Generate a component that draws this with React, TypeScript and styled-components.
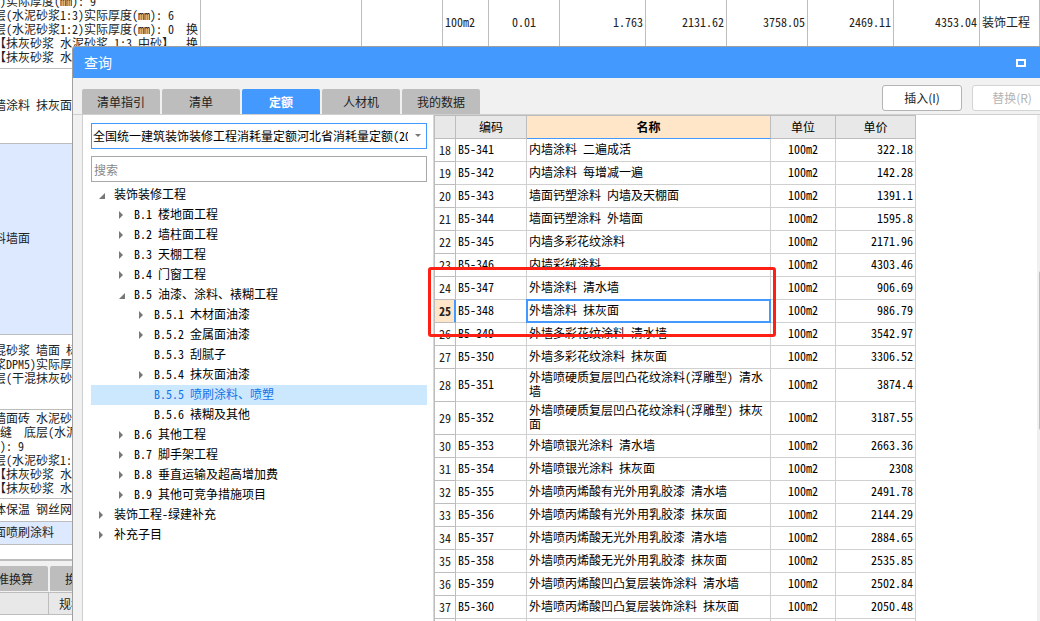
import React from "react";
import styled, { createGlobalStyle, css } from "styled-components";

const MONO = `"Noto Sans Mono CJK SC", "Noto Sans CJK SC", monospace`;
const SANS = `"Noto Sans CJK SC", sans-serif`;
const BLUE = "#4499ff";
const LINE = "#bdbdbd";
const PEACH = "#ffe6c8";

const GlobalStyle = createGlobalStyle`
  *, *::before, *::after { box-sizing: border-box; }
  body { margin: 0; background: #fff; color: #222; font: 12px/14px ${MONO}; }
  button, input, select { margin: 0; font: inherit; color: inherit; }
  table { border-collapse: separate; border-spacing: 0; table-layout: fixed; }
`;

const Screen = styled.div`
  position: relative;
  height: 100vh;
  overflow: hidden;
`;

/* Bill sheet behind the dialog, scrolled part of a row down and to the right */
const Sheet = styled.div`
  margin: -22px 0 0 -8px;
`;

const BillTable = styled.table`
  width: 100%;
`;

const BillRow = styled.tr<{ $h: number; $active?: boolean }>`
  height: ${(p) => p.$h}px;
  background: ${(p) => (p.$active ? "#dce9ff" : "#fff")};
`;

const BillCell = styled.td<{ $align?: string }>`
  padding: 0 2px 2px;
  border-right: 1px solid ${LINE};
  border-bottom: 1px solid ${LINE};
  text-align: ${(p) => p.$align || "left"};
  white-space: pre;
  overflow: hidden;
`;

const DetailPane = styled.div`
  margin-top: 14px;
  padding-top: 5px;
  border-top: 2px solid ${LINE};
  background: #f1f1f1;
`;

const DetailTabs = styled.div`
  display: flex;
  gap: 2px;
  margin-left: -22px;
  padding-bottom: 1px;
`;

const DetailHead = styled.div`
  display: flex;
  height: 23px;
  border-top: 1px solid ${LINE};
  border-bottom: 1px solid ${LINE};
  background: #e8e8e8;
  line-height: 21px;
`;

const DetailHeadCell = styled.div`
  flex: none;
  width: 57px;
  border-right: 1px solid ${LINE};
`;

const DetailHeadLabel = styled.div`
  padding-left: 10px;
`;

const DetailBody = styled.div`
  height: 40px;
  background: #fff;
`;

const Tab = styled.button<{ $active?: boolean }>`
  flex: none;
  width: 78px;
  height: 25px;
  padding: 0;
  border: 0;
  border-radius: 2px 2px 0 0;
  background: ${(p) => (p.$active ? BLUE : LINE)};
  color: ${(p) => (p.$active ? "#fff" : "#222")};
  font-weight: ${(p) => (p.$active ? 700 : 400)};
`;

/* Dialog window floating over the sheet, running past the right edge */
const Dialog = styled.section`
  position: absolute;
  top: 46px;
  left: 72px;
  right: -24px;
  bottom: -20px;
  display: flex;
  flex-direction: column;
  border: 1px solid #a0a0a0;
  border-radius: 3px 3px 0 0;
  background: #f1f1f1;
  overflow: hidden;
`;

const TitleBar = styled.header`
  display: flex;
  flex: none;
  align-items: center;
  justify-content: space-between;
  height: 31px;
  padding: 0 37px 0 11px;
  background: ${BLUE};
  color: #fff;
`;

const Title = styled.h1`
  margin: 0;
  padding-bottom: 2px;
  font: 400 14px/20px ${SANS};
`;

const MaximizeButton = styled.button`
  display: flex;
  padding: 0;
  border: 0;
  background: none;
`;

const Toolbar = styled.div`
  display: flex;
  flex: none;
  align-items: flex-end;
  justify-content: space-between;
  height: 37px;
  padding: 0 11px 0 9px;
  border-bottom: 1px solid #cfcfcf;
`;

const TabList = styled.div`
  display: flex;
  gap: 2px;
`;

const Actions = styled.div`
  display: flex;
  gap: 10px;
  padding-bottom: 3px;
`;

const ActionButton = styled.button`
  width: 80px;
  height: 26px;
  padding: 0;
  border: 1px solid #b4b4b4;
  border-radius: 3px;
  background: #fff;
  font-family: ${SANS};
  color: #222;
  &:disabled {
    border-color: #d4d4d4;
    color: #b4b4b4;
  }
`;

const Body = styled.div`
  display: flex;
  flex: 1;
  min-height: 0;
  margin-left: 9px;
  border-left: 1px solid #cfcfcf;
  background: #fff;
`;

const Side = styled.aside`
  flex: none;
  width: 351px;
  padding: 8px 6px 0 8px;
  border-right: 1px solid #d8d8d8;
`;

const Picker = styled.div`
  position: relative;
  height: 26px;
  margin-bottom: 7px;
  border: 1px solid ${BLUE};
`;

const LibrarySelect = styled.select`
  display: block;
  width: 100%;
  height: 24px;
  padding: 0 18px 0 1px;
  border: 0;
  outline: 0;
  appearance: none;
  background: transparent;
  color: #000;
`;

const PickerArrow = styled.svg`
  position: absolute;
  top: 10px;
  right: 5px;
  pointer-events: none;
`;

const SearchInput = styled.input`
  display: block;
  width: 100%;
  height: 26px;
  margin-bottom: 3px;
  padding: 0 2px;
  border: 1px solid #a8a8a8;
  border-radius: 0;
  &::placeholder { color: #888; opacity: 1; }
`;

const Tree = styled.ul`
  margin: 0;
  padding: 0;
  list-style: none;
`;

const TreeNode = styled.button<{ $level: number; $active?: boolean }>`
  display: flex;
  align-items: center;
  width: 100%;
  height: 20px;
  padding: 0 0 0 ${(p) => 6 + p.$level * 20}px;
  border: 0;
  background: ${(p) => (p.$active ? "#cce8ff" : "transparent")};
  color: ${(p) => (p.$active ? "#1272e8" : "#000")};
  white-space: pre;
`;

const TreeMark = styled.svg`
  flex: none;
  margin-right: 8px;
`;

const TreeLabel = styled.span`
  padding-bottom: 2px;
`;

const Results = styled.main`
  flex: 1;
  min-width: 0;
  overflow: hidden;
`;

const QuotaTable = styled.table`
  width: 482px;
  border-top: 1px solid ${LINE};
  border-left: 1px solid ${LINE};
  color: #000;
`;

const HeadCell = styled.th<{ $active?: boolean }>`
  height: 23px;
  padding: 0;
  border-right: 1px solid ${LINE};
  border-bottom: 1px solid ${(p) => (p.$active ? BLUE : LINE)};
  background: ${(p) => (p.$active ? PEACH : "#e8e8e8")};
  font-weight: ${(p) => (p.$active ? 700 : 400)};
`;

const QuotaRow = styled.tr<{ $tall?: boolean }>`
  height: ${(p) => (p.$tall ? 33 : 23)}px;
`;

const Cell = styled.td<{ $align?: string; $selected?: boolean }>`
  position: relative;
  padding: 0 2px 2px;
  border-right: 1px solid #d0d0d0;
  border-bottom: 1px solid #d0d0d0;
  text-align: ${(p) => p.$align || "left"};
  ${(p) =>
    p.$selected &&
    css`
      &::after {
        content: "";
        position: absolute;
        inset: -1px;
        border: 2px solid ${BLUE};
      }
    `}
`;

const IndexCell = styled.th<{ $active?: boolean }>`
  padding: 0;
  border-right: 1px solid ${(p) => (p.$active ? BLUE : LINE)};
  border-bottom: 1px solid ${LINE};
  box-shadow: ${(p) => (p.$active ? `inset -1px 0 ${BLUE}` : "none")};
  background: ${(p) => (p.$active ? PEACH : "#fff")};
  font-weight: ${(p) => (p.$active ? 700 : 400)};
  color: #222;
`;

const ScrollTrack = styled.div`
  flex: none;
  width: 26px;
  padding: 156px 0 0 2px;
  background: #f0f0f0;
`;

const ScrollThumb = styled.div`
  width: 10px;
  height: 159px;
  border-radius: 2px;
  background: #bdbdbd;
`;

/* Red marker drawn over the rows of interest */
const Marker = styled.div`
  position: absolute;
  top: 267px;
  left: 428px;
  width: 348px;
  height: 70px;
  border: 3px solid #ff2015;
  border-radius: 3px;
  pointer-events: none;
`;

const BILL_COLS = [209, 161, 81, 46, 71, 86, 81, 81, 86, 86];

const firstBill = [
  "混合砂浆 墙面 涂料",
  " )实际厚度(mm): 9",
  "层(水泥砂浆1:3)实际厚度(mm): 6",
  "层(水泥砂浆1:2)实际厚度(mm): 0  换",
  "【抹灰砂浆 水泥砂浆 1:3 中砂】  换",
  "【抹灰砂浆 水泥砂浆 1:2 中砂】",
].join("\n");

const firstFigures: [string, string][] = [
  ["", "left"],
  ["", "left"],
  ["100m2", "left"],
  ["0.01", "center"],
  ["1.763", "right"],
  ["2131.62", "right"],
  ["3758.05", "right"],
  ["2469.11", "right"],
  ["4353.04", "right"],
  ["装饰工程", "left"],
];

const otherBills: { text: string; h: number; active?: boolean }[] = [
  { text: "墙涂料 抹灰面", h: 75 },
  { text: "料墙面", h: 191, active: true },
  { text: "混砂浆 墙面 标\n浆DPM5)实际厚\n层(干混抹灰砂\n ", h: 75 },
  {
    text: "墙面砖 水泥砂\n 缝  底层(水泥\n ): 9\n层(水泥砂浆1:3)\n【抹灰砂浆 水泥\n【抹灰砂浆 水泥",
    h: 89,
  },
  { text: "体保温 钢丝网", h: 23 },
  { text: "面喷刷涂料", h: 23, active: true },
];

type Mark = "open" | "closed" | "none";

const nodes: { label: string; level: number; mark: Mark; active?: boolean }[] = [
  { label: "装饰装修工程", level: 0, mark: "open" },
  { label: "B.1 楼地面工程", level: 1, mark: "closed" },
  { label: "B.2 墙柱面工程", level: 1, mark: "closed" },
  { label: "B.3 天棚工程", level: 1, mark: "closed" },
  { label: "B.4 门窗工程", level: 1, mark: "closed" },
  { label: "B.5 油漆、涂料、裱糊工程", level: 1, mark: "open" },
  { label: "B.5.1 木材面油漆", level: 2, mark: "closed" },
  { label: "B.5.2 金属面油漆", level: 2, mark: "closed" },
  { label: "B.5.3 刮腻子", level: 2, mark: "none" },
  { label: "B.5.4 抹灰面油漆", level: 2, mark: "closed" },
  { label: "B.5.5 喷刷涂料、喷塑", level: 2, mark: "none", active: true },
  { label: "B.5.6 裱糊及其他", level: 2, mark: "none" },
  { label: "B.6 其他工程", level: 1, mark: "closed" },
  { label: "B.7 脚手架工程", level: 1, mark: "closed" },
  { label: "B.8 垂直运输及超高增加费", level: 1, mark: "closed" },
  { label: "B.9 其他可竞争措施项目", level: 1, mark: "closed" },
  { label: "装饰工程-绿建补充", level: 0, mark: "closed" },
  { label: "补充子目", level: 0, mark: "closed" },
];

const quotas: [number, string, string][] = [
  [18, "内墙涂料 二遍成活", "322.18"],
  [19, "内墙涂料 每增减一遍", "142.28"],
  [20, "墙面钙塑涂料 内墙及天棚面", "1391.1"],
  [21, "墙面钙塑涂料 外墙面", "1595.8"],
  [22, "内墙多彩花纹涂料", "2171.96"],
  [23, "内墙彩绒涂料", "4303.46"],
  [24, "外墙涂料 清水墙", "906.69"],
  [25, "外墙涂料 抹灰面", "986.79"],
  [26, "外墙多彩花纹涂料 清水墙", "3542.97"],
  [27, "外墙多彩花纹涂料 抹灰面", "3306.52"],
  [28, "外墙喷硬质复层凹凸花纹涂料(浮雕型) 清水墙", "3874.4"],
  [29, "外墙喷硬质复层凹凸花纹涂料(浮雕型) 抹灰面", "3187.55"],
  [30, "外墙喷银光涂料 清水墙", "2663.36"],
  [31, "外墙喷银光涂料 抹灰面", "2308"],
  [32, "外墙喷丙烯酸有光外用乳胶漆 清水墙", "2491.78"],
  [33, "外墙喷丙烯酸有光外用乳胶漆 抹灰面", "2144.29"],
  [34, "外墙喷丙烯酸无光外用乳胶漆 清水墙", "2884.65"],
  [35, "外墙喷丙烯酸无光外用乳胶漆 抹灰面", "2535.85"],
  [36, "外墙喷丙烯酸凹凸复层装饰涂料 清水墙", "2502.84"],
  [37, "外墙喷丙烯酸凹凸复层装饰涂料 抹灰面", "2050.48"],
];

const markPaths: Record<Mark, string> = {
  open: "M8 3v6H2z",
  closed: "M2 1l4 4-4 4z",
  none: "",
};

function BillSheet() {
  return (
    <Sheet>
      <BillTable>
        <colgroup>
          {BILL_COLS.map((w, i) => (
            <col key={i} width={w} />
          ))}
          <col />
        </colgroup>
        <tbody>
          <BillRow $h={91}>
            <BillCell>{firstBill}</BillCell>
            {firstFigures.map(([text, align], i) => (
              <BillCell key={i} $align={align}>
                {text}
              </BillCell>
            ))}
          </BillRow>
          {otherBills.map((row) => (
            <BillRow key={row.text} $h={row.h} $active={row.active}>
              <BillCell>{row.text}</BillCell>
              <BillCell colSpan={10} />
            </BillRow>
          ))}
        </tbody>
      </BillTable>
      <DetailPane>
        <DetailTabs>
          <Tab type="button">标准换算</Tab>
          <Tab type="button">换算信息</Tab>
        </DetailTabs>
        <DetailHead>
          <DetailHeadCell />
          <DetailHeadLabel>规格及型号</DetailHeadLabel>
        </DetailHead>
        <DetailBody />
      </DetailPane>
    </Sheet>
  );
}

export default function App() {
  return (
    <Screen>
      <GlobalStyle />
      <BillSheet />
      <Dialog role="dialog" aria-labelledby="query-title">
        <TitleBar>
          <Title id="query-title">查询</Title>
          <MaximizeButton type="button" aria-label="最大化">
            <svg width="10" height="8" viewBox="0 0 10 8">
              <path d="M1 1h8v6H1z" fill="none" stroke="#fff" strokeWidth="2" />
            </svg>
          </MaximizeButton>
        </TitleBar>
        <Toolbar>
          <TabList role="tablist">
            {["清单指引", "清单", "定额", "人材机", "我的数据"].map((name) => (
              <Tab
                key={name}
                type="button"
                role="tab"
                aria-selected={name === "定额"}
                $active={name === "定额"}
              >
                {name}
              </Tab>
            ))}
          </TabList>
          <Actions>
            <ActionButton type="button">插入(I)</ActionButton>
            <ActionButton type="button" disabled>
              替换(R)
            </ActionButton>
          </Actions>
        </Toolbar>
        <Body>
          <Side>
            <Picker>
              <LibrarySelect aria-label="定额库">
                <option>全国统一建筑装饰装修工程消耗量定额河北省消耗量定额(2012)</option>
              </LibrarySelect>
              <PickerArrow width="6" height="4" viewBox="0 0 6 4">
                <path d="M0 0h6L3 3z" fill="#777" />
              </PickerArrow>
            </Picker>
            <SearchInput type="search" aria-label="搜索" placeholder="搜索" />
            <Tree>
              {nodes.map((n) => (
                <li key={n.label}>
                  <TreeNode type="button" $level={n.level} $active={n.active}>
                    <TreeMark width="9" height="10" viewBox="0 0 9 10">
                      <path d={markPaths[n.mark]} fill="#777" />
                    </TreeMark>
                    <TreeLabel>{n.label}</TreeLabel>
                  </TreeNode>
                </li>
              ))}
            </Tree>
          </Side>
          <Results>
            <QuotaTable>
              <colgroup>
                <col width={21} />
                <col width={71} />
                <col width={244} />
                <col width={65} />
                <col width={80} />
              </colgroup>
              <thead>
                <tr>
                  <HeadCell />
                  <HeadCell>编码</HeadCell>
                  <HeadCell $active>名称</HeadCell>
                  <HeadCell>单位</HeadCell>
                  <HeadCell>单价</HeadCell>
                </tr>
              </thead>
              <tbody>
                {quotas.map(([index, name, price]) => (
                  <QuotaRow key={index} $tall={name.includes("浮雕型")}>
                    <IndexCell scope="row" $active={index === 25}>
                      {index}
                    </IndexCell>
                    <Cell>B5-{index + 323}</Cell>
                    <Cell $selected={index === 25}>{name}</Cell>
                    <Cell $align="center">100m2</Cell>
                    <Cell $align="right">{price}</Cell>
                  </QuotaRow>
                ))}
                <QuotaRow>
                  <IndexCell />
                  <Cell />
                  <Cell />
                  <Cell />
                  <Cell />
                </QuotaRow>
              </tbody>
            </QuotaTable>
          </Results>
          <ScrollTrack>
            <ScrollThumb />
          </ScrollTrack>
        </Body>
      </Dialog>
      <Marker />
    </Screen>
  );
}
